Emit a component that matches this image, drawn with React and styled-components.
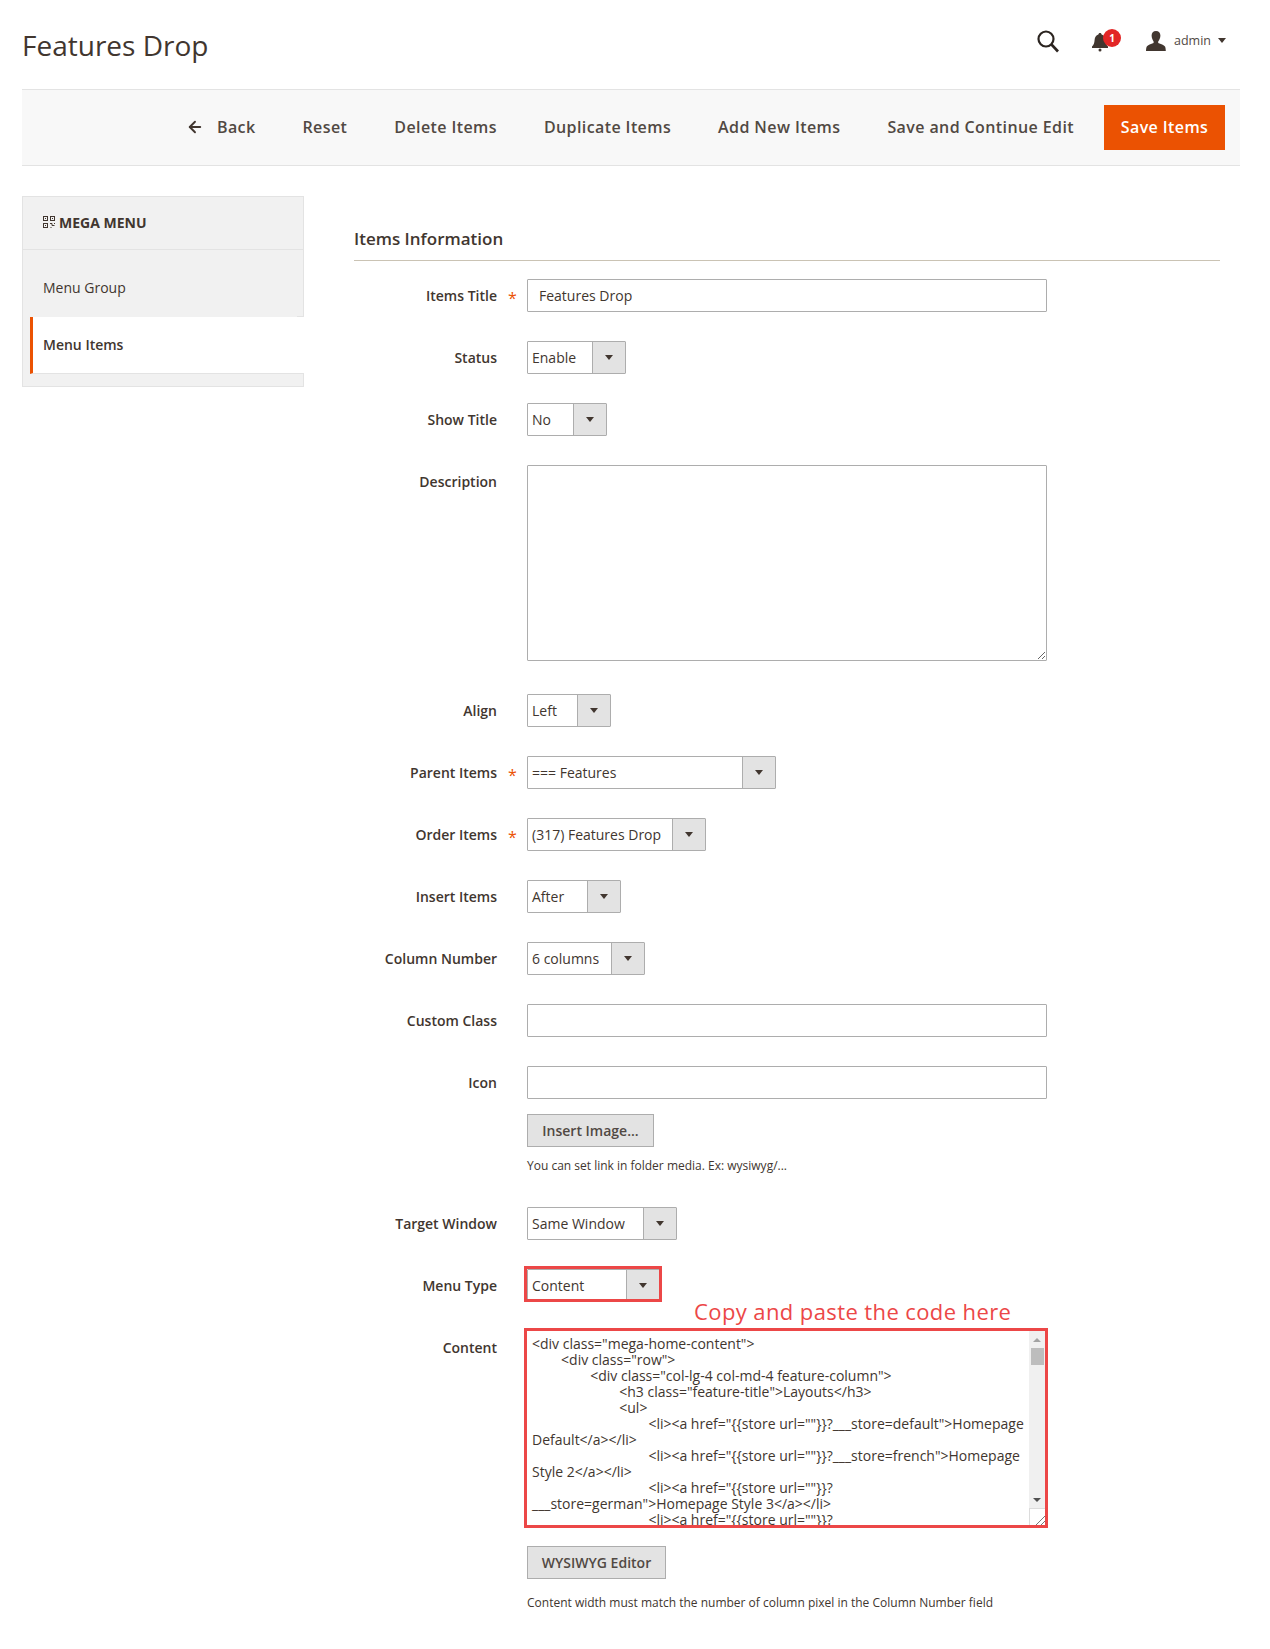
import styled, { createGlobalStyle } from "styled-components";
import { ArrowLeft } from "lucide-react";

const contentCode = `<div class="mega-home-content">
	<div class="row">
		<div class="col-lg-4 col-md-4 feature-column">
			<h3 class="feature-title">Layouts</h3>
			<ul>
				<li><a href="{{store url=""}}?___store=default">Homepage Default</a></li>
				<li><a href="{{store url=""}}?___store=french">Homepage Style 2</a></li>
				<li><a href="{{store url=""}}?___store=german">Homepage Style 3</a></li>
				<li><a href="{{store url=""}}?___store=spanish">Homepage Style 4</a></li>
			</ul>
		</div>
	</div>
</div>`;

const GlobalStyle = createGlobalStyle`
  html, body {
    margin: 0;
    padding: 0;
    background: #fff;
  }
  body {
    font-family: "Open Sans", "Liberation Sans", sans-serif;
    color: #41362f;
  }
  * {
    box-sizing: border-box;
  }
`;

const Page = styled.div`
  width: 1270px;
  height: 1649px;
  padding: 0 30px 0 22px;
  overflow: hidden;
`;

const TopBar = styled.header`
  height: 89px;
  display: flex;
  align-items: center;
  justify-content: space-between;
`;

const PageTitle = styled.h1`
  margin: 0;
  font-size: 28px;
  font-weight: 400;
  color: #41362f;
`;

const TopActions = styled.div`
  display: flex;
  align-items: center;
  margin: 0 14px 8px 0;
`;

const IconButton = styled.div`
  position: relative;
  display: flex;
  margin-top: ${(p) => p.$top ?? 0}px;
  margin-right: ${(p) => p.$gap}px;
`;

const Badge = styled.span`
  position: absolute;
  top: -3px;
  left: 12px;
  width: 18px;
  height: 18px;
  border-radius: 50%;
  background: #e22626;
  color: #fff;
  font-size: 10px;
  font-weight: 700;
  line-height: 18px;
  text-align: center;
`;

const UserName = styled.span`
  margin: 0 7px 0 8px;
  font-size: 12.5px;
  color: #514943;
`;

const Caret = styled.span`
  width: 0;
  height: 0;
  border-left: 4px solid transparent;
  border-right: 4px solid transparent;
  border-top: 5px solid #41362f;
`;

const Toolbar = styled.div`
  height: 77px;
  display: flex;
  align-items: center;
  justify-content: flex-end;
  padding-right: 15px;
  background: #f8f8f8;
  border-top: 1px solid #e3e3e3;
  border-bottom: 1px solid #e3e3e3;
`;

const ToolbarLink = styled.a`
  display: flex;
  align-items: center;
  margin-right: 47px;
  padding-bottom: 2px;
  font-size: 16px;
  font-weight: 600;
  letter-spacing: 0.4px;
  color: #514943;
  svg {
    margin-right: 13px;
    color: #41362f;
  }
`;

const SaveButton = styled.button`
  width: 121px;
  height: 45px;
  margin-left: -17px;
  padding: 0 0 2px;
  border: 0;
  background: #eb5202;
  color: #fff;
  font-family: inherit;
  font-size: 16px;
  font-weight: 600;
  letter-spacing: 0.4px;
`;

const Columns = styled.div`
  display: flex;
  gap: 50px;
  margin-top: 30px;
`;

const Sidebar = styled.aside`
  flex: 0 0 282px;
  height: 191px;
  background: #f1f1f1;
  border: 1px solid #e3e3e3;
`;

const SideHeader = styled.div`
  height: 53px;
  display: flex;
  align-items: center;
  gap: 4px;
  padding: 0 0 2px 20px;
  border-bottom: 1px solid #e3e3e3;
  font-size: 14px;
  font-weight: 700;
  color: #41362f;
`;

const SideItem = styled.div`
  height: ${(p) => (p.$active ? 57 : 67)}px;
  margin-left: ${(p) => (p.$active ? 7 : 0)}px;
  margin-right: ${(p) => (p.$active ? -1 : 0)}px;
  display: flex;
  align-items: center;
  padding: ${(p) => (p.$active ? "0 0 2px 10px" : "7px 0 0 20px")};
  font-size: 14px;
  font-weight: ${(p) => (p.$active ? 600 : 400)};
  color: #41362f;
  background: ${(p) => (p.$active ? "#fff" : "transparent")};
  border-left: ${(p) => (p.$active ? "3px solid #eb5202" : "0")};
  border-bottom: ${(p) => (p.$active ? "1px solid #e3e3e3" : "0")};
  box-shadow: ${(p) => (p.$active ? "-7px -1px 0 0 #f1f1f1, 0 -1px 0 0 #e3e3e3" : "none")};
`;

const Main = styled.main`
  flex: 1;
  padding: 31px 20px 0 0;
`;

const SectionTitle = styled.h2`
  margin: 0 0 18px;
  padding-bottom: 10px;
  border-bottom: 1px solid #cac3b4;
  font-size: 17px;
  font-weight: 600;
  line-height: 23px;
  color: #41362f;
`;

const Row = styled.div`
  position: relative;
  display: grid;
  grid-template-columns: 143px 30px 520px;
  margin-bottom: ${(p) => p.$after ?? 29}px;
`;

const Label = styled.label`
  height: 33px;
  line-height: 33px;
  text-align: right;
  font-size: 14px;
  font-weight: 600;
  color: #41362f;
`;

const Star = styled.span`
  height: 33px;
  padding-left: 11px;
  line-height: 38px;
  font-size: 16px;
  color: #eb5202;
`;

const Control = styled.div`
  display: flex;
  flex-direction: column;
  align-items: flex-start;
`;

const TextInput = styled.input`
  width: 520px;
  height: 33px;
  padding: 0 11px;
  border: 1px solid #adadad;
  border-radius: 1px;
  background: #fff;
  font-family: inherit;
  font-size: 14px;
  color: #41362f;
  outline: 0;
`;

const TextArea = styled.textarea`
  display: block;
  width: 520px;
  height: 196px;
  border: 1px solid #adadad;
  border-radius: 1px;
  background: #fff;
  outline: 0;
`;

const SelectBox = styled.div`
  position: relative;
  width: ${(p) => p.$width}px;
  height: 33px;
  display: flex;
  border: 1px solid #adadad;
  border-radius: 1px;
`;

const SelectValue = styled.span`
  flex: 1;
  padding-left: 4px;
  line-height: 31px;
  font-size: 14px;
  color: #41362f;
`;

const SelectArrow = styled.span`
  flex: 0 0 33px;
  display: flex;
  align-items: center;
  justify-content: center;
  background: #e3e3e3;
  border-left: 1px solid #adadad;
  &::after {
    content: "";
    border-left: 4px solid transparent;
    border-right: 4px solid transparent;
    border-top: 5px solid #41362f;
  }
`;

const RedMark = styled.span`
  position: absolute;
  top: -4px;
  left: -4px;
  width: 138px;
  height: 36px;
  border: 3px solid #ec4747;
`;

const GreyButton = styled.button`
  width: ${(p) => p.$width}px;
  height: 33px;
  margin-top: ${(p) => p.$top ?? 0}px;
  padding: 0;
  border: 1px solid #adadad;
  background: #e3e3e3;
  font-family: inherit;
  font-size: 14px;
  font-weight: 600;
  color: #514943;
`;

const Note = styled.p`
  margin: ${(p) => p.$top}px 0 0;
  font-size: 12px;
  line-height: 16px;
  color: #41362f;
`;

const CodeField = styled.div`
  position: relative;
  width: 524px;
  height: 200px;
  margin: -3px 0 18px -3px;
  border: 3px solid #ec4747;
`;

const CodeText = styled.textarea`
  display: block;
  width: 100%;
  height: 100%;
  padding: 5px 18px 0 5px;
  border: 0;
  border-radius: 0;
  background: #fff;
  font-family: inherit;
  font-size: 14px;
  line-height: 16px;
  color: #41362f;
  outline: 0;
  overflow: hidden;
  resize: none;
`;

const ScrollBar = styled.div`
  position: absolute;
  top: 0;
  right: 0;
  bottom: 0;
  width: 16px;
  display: flex;
  flex-direction: column;
  background: #f0f0f0;
`;

const ScrollTrack = styled.div`
  flex: 1;
  padding-left: 2px;
`;

const ScrollThumb = styled.div`
  width: 13px;
  height: 17px;
  background: #bdbdbd;
`;

const ScrollStep = styled.div`
  flex: 0 0 17px;
  display: flex;
  align-items: center;
  justify-content: center;
  &::after {
    content: "";
    border-left: 4px solid transparent;
    border-right: 4px solid transparent;
    ${(p) => (p.$down ? "border-top: 4px solid #505050;" : "border-bottom: 4px solid #a3a3a3;")}
  }
`;

const ResizeCorner = styled.div`
  flex: 0 0 17px;
  display: flex;
  align-items: flex-end;
  justify-content: flex-end;
  background: #fff;
  border-left: 1px solid #dcdcdc;
  border-top: 1px solid #dcdcdc;
`;

const Annotation = styled.span`
  position: absolute;
  left: 340px;
  top: -34px;
  font-size: 22px;
  line-height: 29px;
  letter-spacing: 0.4px;
  color: #ec4747;
`;

const SearchIcon = () => (
  <svg width="24" height="24" viewBox="0 0 24 24" fill="none" stroke="#2b2420" strokeWidth="2.2">
    <circle cx="10" cy="10" r="7.5" />
    <path d="M15.5 15.5 22 22.5" strokeWidth="2.6" />
  </svg>
);

const BellIcon = () => (
  <svg width="18" height="20" viewBox="0 0 18 20" fill="#41362f">
    <path d="M9 1c-1 0-1.500.7-1.600 1.500C5 3.300 3.800 5.200 3.600 8c-.2 3-.8 5-2.600 6.500V16h16v-1.500C15.200 13 14.600 11 14.400 8c-.2-2.800-1.400-4.700-3.800-5.500C10.500 1.700 10 1 9 1z" />
    <circle cx="9" cy="18" r="1.500" />
  </svg>
);

const UserIcon = () => (
  <svg width="20" height="20" viewBox="0 0 20 20" fill="#41362f">
    <path d="M10 0c2.800 0 4.400 1.900 4.400 4.600 0 2.400-1 4.600-2.200 5.800v1.600c2.500 1 5.800 2 6.800 3.400.5.800.7 2.400.8 4.600H0c.1-2.200.3-3.800.8-4.600 1-1.400 4.300-2.400 6.800-3.400v-1.600C6.600 9.200 5.600 7 5.600 4.600 5.600 1.900 7.200 0 10 0z" />
  </svg>
);

const QrIcon = () => (
  <svg width="12" height="12" viewBox="0 0 12 12" fill="none" stroke="#41362f" strokeWidth="1">
    <rect x="0.500" y="0.500" width="4" height="4" />
    <rect x="7.500" y="0.500" width="4" height="4" />
    <rect x="0.500" y="7.500" width="4" height="4" />
    <path d="M2 2.500h1M9 2.500h1M2 9.500h1M7 7.500h2v2h2.500M11.500 7v1M7.500 11.500h1" />
  </svg>
);

const GripIcon = () => (
  <svg width="12" height="12" viewBox="0 0 12 12" fill="none" stroke="#777" strokeWidth="1">
    <path d="M3 12 12 3M8 12l4-4" />
  </svg>
);

const Select = ({ value, width, marked }) => (
  <SelectBox $width={width}>
    <SelectValue>{value}</SelectValue>
    <SelectArrow />
    {marked && <RedMark />}
  </SelectBox>
);

const Field = ({ label, required, after, children }) => (
  <Row $after={after}>
    <Label>{label}</Label>
    <Star>{required ? "*" : ""}</Star>
    <Control>{children}</Control>
  </Row>
);

const toolbarLinks = [
  "Reset",
  "Delete Items",
  "Duplicate Items",
  "Add New Items",
  "Save and Continue Edit",
];

export default function App() {
  return (
    <Page>
      <GlobalStyle />
      <TopBar>
        <PageTitle>Features Drop</PageTitle>
        <TopActions>
          <IconButton $gap={31} $top={1}>
            <SearchIcon />
          </IconButton>
          <IconButton $gap={37} $top={3}>
            <BellIcon />
            <Badge>1</Badge>
          </IconButton>
          <IconButton $gap={0}>
            <UserIcon />
          </IconButton>
          <UserName>admin</UserName>
          <Caret />
        </TopActions>
      </TopBar>

      <Toolbar>
        <ToolbarLink>
          <ArrowLeft size={18} strokeWidth={2.5} />
          Back
        </ToolbarLink>
        {toolbarLinks.map((label) => (
          <ToolbarLink key={label}>{label}</ToolbarLink>
        ))}
        <SaveButton>Save Items</SaveButton>
      </Toolbar>

      <Columns>
        <Sidebar>
          <SideHeader>
            <QrIcon />
            MEGA MENU
          </SideHeader>
          <SideItem>Menu Group</SideItem>
          <SideItem $active>Menu Items</SideItem>
        </Sidebar>

        <Main>
          <SectionTitle>Items Information</SectionTitle>
          <Field label="Items Title" required>
            <TextInput defaultValue="Features Drop" />
          </Field>
          <Field label="Status">
            <Select value="Enable" width={99} />
          </Field>
          <Field label="Show Title">
            <Select value="No" width={80} />
          </Field>
          <Field label="Description" after={33}>
            <TextArea />
          </Field>
          <Field label="Align">
            <Select value="Left" width={84} />
          </Field>
          <Field label="Parent Items" required>
            <Select value="=== Features" width={249} />
          </Field>
          <Field label="Order Items" required>
            <Select value="(317) Features Drop" width={179} />
          </Field>
          <Field label="Insert Items">
            <Select value="After" width={94} />
          </Field>
          <Field label="Column Number">
            <Select value="6 columns" width={118} />
          </Field>
          <Field label="Custom Class">
            <TextInput />
          </Field>
          <Field label="Icon" after={33}>
            <TextInput />
            <GreyButton $top={15} $width={127}>
              Insert Image...
            </GreyButton>
            <Note $top={11}>You can set link in folder media. Ex: wysiwyg/...</Note>
          </Field>
          <Field label="Target Window">
            <Select value="Same Window" width={150} />
          </Field>
          <Field label="Menu Type">
            <Select value="Content" width={133} marked />
          </Field>
          <Row>
            <Label>Content</Label>
            <Star />
            <Control>
              <Annotation>Copy and paste the code here</Annotation>
              <CodeField>
                <CodeText defaultValue={contentCode} />
                <ScrollBar>
                  <ScrollStep />
                  <ScrollTrack>
                    <ScrollThumb />
                  </ScrollTrack>
                  <ScrollStep $down />
                  <ResizeCorner>
                    <GripIcon />
                  </ResizeCorner>
                </ScrollBar>
              </CodeField>
              <GreyButton $width={139}>WYSIWYG Editor</GreyButton>
              <Note $top={16}>Content width must match the number of column pixel in the Column Number field</Note>
            </Control>
          </Row>
        </Main>
      </Columns>
    </Page>
  );
}
